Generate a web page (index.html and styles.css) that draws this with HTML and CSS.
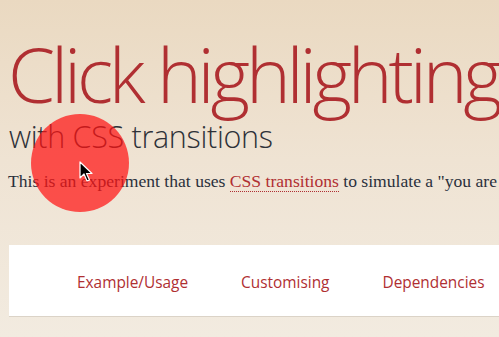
FILE: index.html
```html
<!DOCTYPE html>
<html>
<head>
<meta charset="utf-8">
<link rel="stylesheet" href="styles.css">
</head>
<body>
<header class="intro">
  <h1 class="title">Click highlighting</h1>
  <h2 class="subtitle">with CSS transitions</h2>
  <p class="lead">This is an experiment that uses <a class="inline-link" href="#">CSS transitions</a> to simulate a "you are here" style click highlight.</p>
</header>
<nav class="nav">
  <a class="nav-link" href="#">Example/Usage</a>
  <a class="nav-link" href="#">Customising</a>
  <a class="nav-link" href="#">Dependencies</a>
  <a class="nav-link" href="#">Download</a>
</nav>
<div class="click-circle"></div>
<svg class="cursor" width="14" height="22" viewBox="0 0 14 22">
  <path d="M1 1 L1 17 L5 13 L8 20 L10.5 19 L7.5 12.5 L13 12.5 Z" fill="#000" stroke="#fff" stroke-width="1.2" stroke-linejoin="round"/>
</svg>
</body>
</html>
```
FILE: styles.css
```css
html, body {
  margin: 0;
  padding: 0;
}
body {
  width: 499px;
  height: 337px;
  overflow: hidden;
  background: linear-gradient(#ead9c1 0px, #efe3d3 160px, #f2ebe0 337px);
  position: relative;
}
.intro {
  padding: 32px 0 0 9px;
  white-space: nowrap;
}
.title {
  margin: 0 0 0 -1px;
  font-family: "Open Sans", sans-serif;
  font-weight: 300;
  font-size: 76px;
  line-height: 84px;
  color: #b02f32;
  letter-spacing: -4.2px;
}
.subtitle {
  margin: 2px 0 0 0;
  font-family: "Open Sans", sans-serif;
  font-weight: 300;
  font-size: 30.5px;
  line-height: 36px;
  color: #2e3138;
  letter-spacing: -0.3px;
}
.lead {
  margin: 15px 0 0 -1px;
  font-family: "Liberation Serif", Georgia, serif;
  font-size: 17.6px;
  line-height: 24px;
  color: #2a303c;
}
.inline-link {
  color: #b02f32;
  text-decoration: none;
  border-bottom: 1px dotted #b02f32;
}
.nav {
  margin: 52px 0 0 9px;
  background: #fff;
  height: 72px;
  border-bottom: 1px solid #dbd3c7;
  display: flex;
  align-items: center;
  gap: 53px;
  padding-left: 68px;
  padding-top: 4px;
  box-sizing: border-box;
  white-space: nowrap;
}
.nav-link {
  font-family: "Open Sans", sans-serif;
  font-size: 15.4px;
  color: #b02f32;
  text-decoration: none;
}
.click-circle {
  position: absolute;
  left: 31px;
  top: 114px;
  width: 98px;
  height: 98px;
  border-radius: 50%;
  background: rgba(255, 20, 20, 0.72);
}
.cursor {
  position: absolute;
  left: 79px;
  top: 161px;
}
```
